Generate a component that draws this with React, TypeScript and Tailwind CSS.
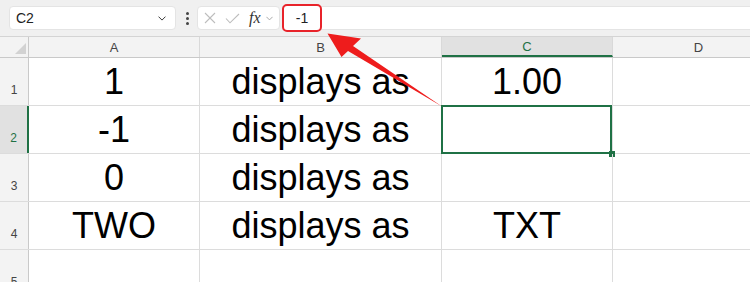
import React from "react";

const rows = [
  { n: 1, a: "1", b: "displays as", c: "1.00" },
  { n: 2, a: "-1", b: "displays as", c: "" },
  { n: 3, a: "0", b: "displays as", c: "" },
  { n: 4, a: "TWO", b: "displays as", c: "TXT" },
  { n: 5, a: "", b: "", c: "" },
];

function Chevron({ w = 10, h = 6, color = "#444" }: { w?: number; h?: number; color?: string }) {
  return (
    <svg width={w} height={h} viewBox="0 0 10 6" fill="none">
      <polyline points="1,1 5,5 9,1" stroke={color} strokeWidth="1.2" strokeLinecap="round" strokeLinejoin="round" />
    </svg>
  );
}

export default function App() {
  return (
    <div className="relative w-[750px] h-[282px] overflow-hidden bg-white font-['Liberation_Sans',Arial,sans-serif]">
      {/* Formula bar */}
      <div className="flex items-center h-[37px] bg-[#f0f0f0] border-b border-[#d4d4d4]">
        <div className="ml-[9px] flex items-center justify-between w-[167px] h-[24px] bg-white rounded-[4px] border border-[#e4e4e4] pl-[6px] pr-[9px]">
          <span className="text-[14px] leading-none text-[#222]">C2</span>
          <Chevron w={8} h={5} color="#333" />
        </div>
        <div className="ml-[9px] flex flex-col items-center gap-[2px] w-[4px]">
          <span className="w-[3px] h-[3px] rounded-full bg-[#444]" />
          <span className="w-[3px] h-[3px] rounded-full bg-[#444]" />
          <span className="w-[3px] h-[3px] rounded-full bg-[#444]" />
        </div>
        <div className="ml-[8px] flex items-center w-[83px] h-[24px] bg-white rounded-[4px] border border-[#e4e4e4] pl-[6px]">
          <svg width="12" height="12" viewBox="0 0 12 12" fill="none">
            <line x1="1" y1="1" x2="11" y2="11" stroke="#bdbdbd" strokeWidth="1.1" />
            <line x1="11" y1="1" x2="1" y2="11" stroke="#bdbdbd" strokeWidth="1.1" />
          </svg>
          <svg className="ml-[9px]" width="15" height="11" viewBox="0 0 15 11" fill="none">
            <polyline points="1,5.5 5,9.8 14,1" stroke="#bdbdbd" strokeWidth="1.1" fill="none" />
          </svg>
          <span className="ml-[9px] font-['Liberation_Serif',serif] italic text-[16px] leading-none text-[#333]">fx</span>
          <span className="ml-[5px] flex items-center">
            <Chevron w={7} h={5} color="#9a9a9a" />
          </span>
        </div>
        <div className="ml-[2px] flex-1 flex items-center h-[24px] bg-white border-y border-[#e4e4e4]">
          <div className="flex items-center justify-center w-[40px] h-[28px] border-2 border-[#e8232a] rounded-[5px] bg-white">
            <span className="text-[14px] leading-none text-[#222]">-1</span>
          </div>
        </div>
      </div>

      {/* Column headers */}
      <div className="flex h-[21px] bg-[#f3f3f3] border-b border-[#c9c9c9]">
        <div className="relative w-[29px] shrink-0 border-r border-[#c9c9c9]">
          <svg className="absolute left-[15px] top-[6px]" width="11" height="11" viewBox="0 0 11 11">
            <polygon points="11,0 11,11 0,11" fill="#d2d2d2" />
          </svg>
        </div>
        <div className="w-[171px] shrink-0 border-r border-[#d9d9d9] flex items-center justify-center text-[13px] leading-none text-[#444]">A</div>
        <div className="w-[242px] shrink-0 border-r border-[#d9d9d9] flex items-center justify-center text-[13px] leading-none text-[#444]">B</div>
        <div className="w-[171px] shrink-0 border-r border-[#d9d9d9] bg-[#e1e1e1] border-b-2 border-b-[#1f7145] flex items-center justify-center text-[13px] leading-none text-[#1f7145]">C</div>
        <div className="w-[172px] shrink-0 border-r border-[#d9d9d9] flex items-center justify-center text-[13px] leading-none text-[#444]">D</div>
      </div>

      {/* Rows */}
      {rows.map((r) => {
        const sel = r.n === 2;
        return (
          <div key={r.n} className="flex h-[48px] border-b border-[#dcdcdc]">
            <div
              className={
                sel
                  ? "w-[29px] shrink-0 bg-[#e1e1e1] border-r-2 border-[#1f7145] flex justify-center pt-[26px] text-[12px] leading-[12px] text-[#1f7145]"
                  : "w-[29px] shrink-0 bg-[#f3f3f3] border-r border-[#c9c9c9] flex justify-center pt-[26px] text-[12px] leading-[12px] text-[#444]"
              }
            >
              {r.n}
            </div>
            <div className="w-[171px] shrink-0 border-r border-[#dcdcdc] flex justify-center pt-[6px] text-[36px] leading-[36px] text-black">
              {r.a}
            </div>
            <div className="w-[242px] shrink-0 border-r border-[#dcdcdc] flex justify-center pt-[6px] text-[36px] leading-[36px] text-black">
              {r.b}
            </div>
            <div className="relative w-[171px] shrink-0 border-r border-[#dcdcdc] flex justify-center pt-[6px] text-[36px] leading-[36px] text-black">
              {r.c}
              {sel && (
                <>
                  <div className="absolute -left-[1px] -top-[1px] right-0 -bottom-[1px] border-2 border-[#1f7145]" />
                  <div className="absolute -right-[3px] -bottom-[4px] w-[6px] h-[6px] bg-[#1f7145]" />
                </>
              )}
            </div>
            <div className="w-[172px] shrink-0 border-r border-[#dcdcdc]" />
          </div>
        );
      })}

      {/* Red annotation arrow */}
      <svg className="absolute left-0 top-0 pointer-events-none" width="750" height="282" viewBox="0 0 750 282">
        <polygon
          points="327.5,33.5 361,38.5 353,46 442,106.5 348,51 341.5,57"
          fill="#ee1c1c"
        />
      </svg>
    </div>
  );
}
